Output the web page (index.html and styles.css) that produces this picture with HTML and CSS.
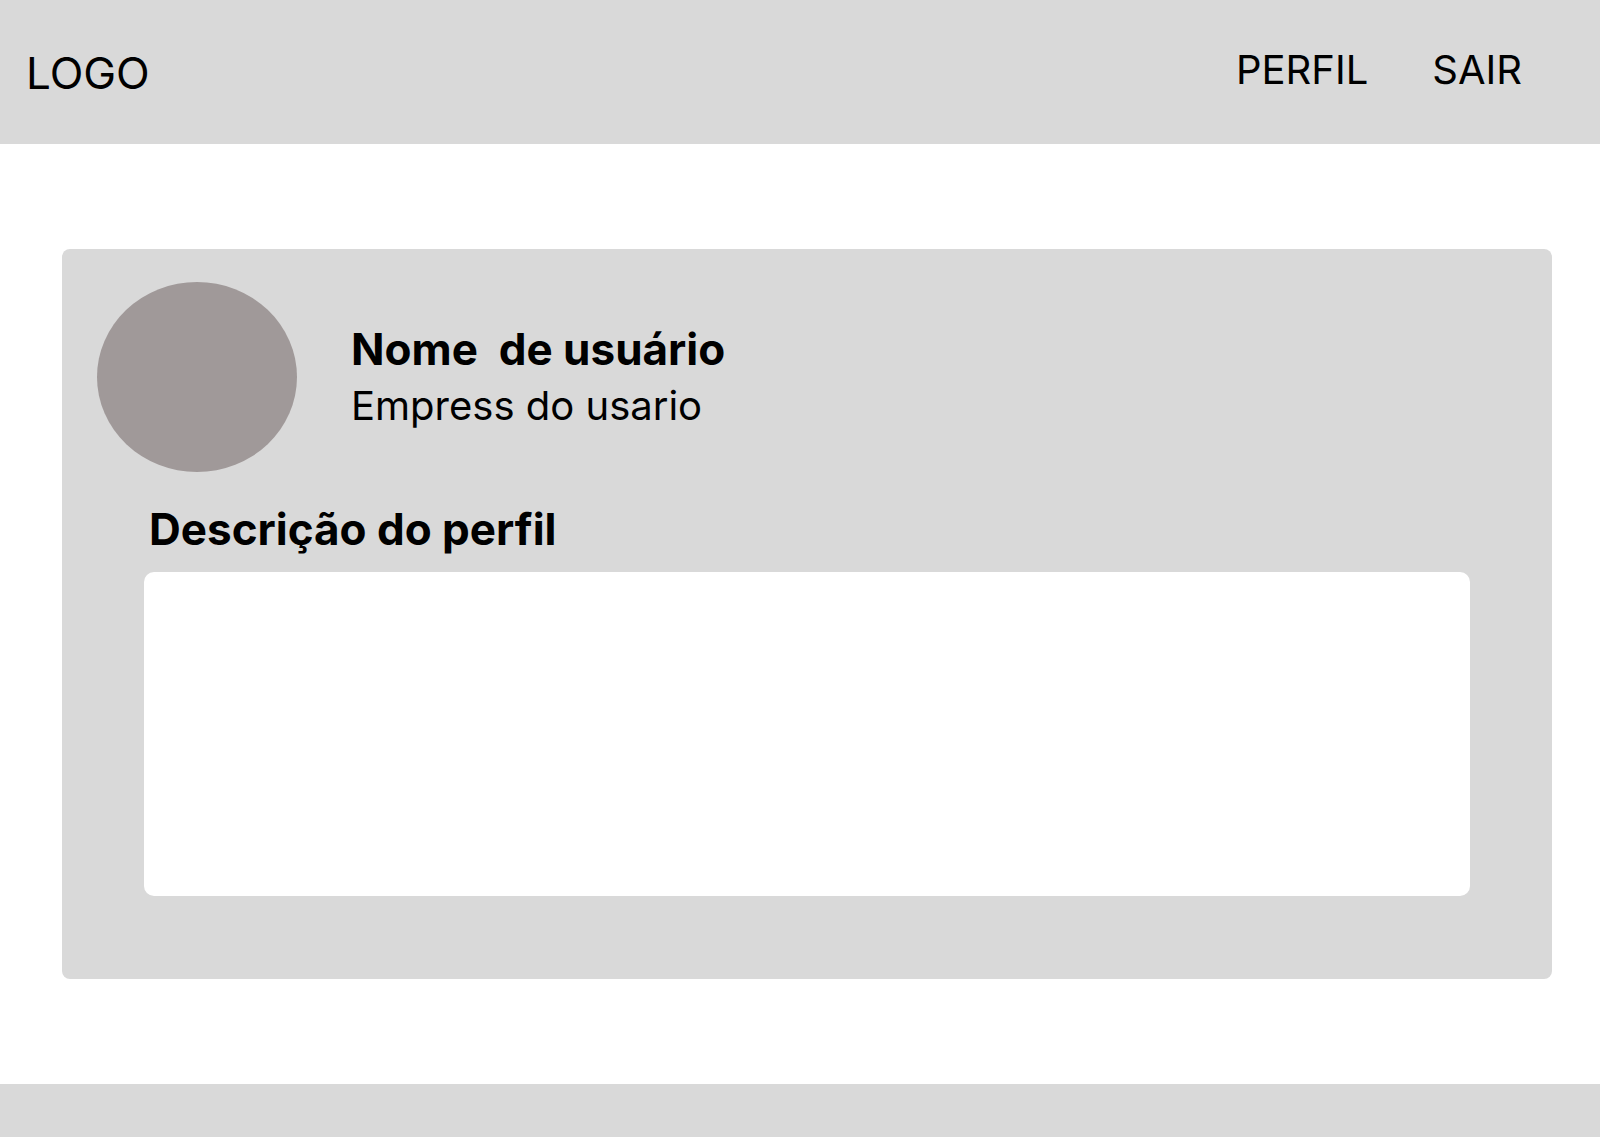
FILE: index.html
```html
<!DOCTYPE html>
<html lang="pt-BR">
<head>
<meta charset="utf-8">
<title>Perfil</title>
<link rel="stylesheet" href="styles.css">
</head>
<body>
<header class="topbar">
  <div class="logo">LOGO</div>
  <nav class="nav">
    <a class="nav-link" href="#">PERFIL</a>
    <a class="nav-link" href="#">SAIR</a>
  </nav>
</header>
<main class="main">
  <section class="card">
    <div class="user">
      <div class="avatar"></div>
      <div class="user-info">
        <div class="user-name">Nome&nbsp; de usuário</div>
        <div class="user-company">Empress do usario</div>
      </div>
    </div>
    <div class="desc">
      <h2 class="desc-title">Descrição do perfil</h2>
      <div class="desc-box"></div>
    </div>
  </section>
</main>
<footer class="footer"></footer>
</body>
</html>
```

FILE: styles.css
```css
* { box-sizing: border-box; }
html, body { margin: 0; padding: 0; }
body {
  font-family: Inter, "Noto Sans", sans-serif;
  color: #000;
  background: #fff;
  width: 1600px;
  height: 1137px;
  display: flex;
  flex-direction: column;
}
.topbar {
  height: 144px;
  background: #d9d9d9;
  display: flex;
  align-items: center;
  justify-content: space-between;
  padding: 0 78px 0 26px;
}
.logo {
  font-size: 44px;
  line-height: 1;
  margin-top: 2px;
}
.nav {
  display: flex;
  gap: 64px;
}
.nav-link {
  font-size: 40px;
  line-height: 1;
  color: #000;
  text-decoration: none;
  margin-bottom: 4px;
}
.main {
  flex: 1;
  padding: 105px 48px 0 62px;
}
.card {
  height: 730px;
  background: #d9d9d9;
  border-radius: 8px;
  padding: 33px 82px 0 35px;
}
.user {
  display: flex;
  align-items: flex-start;
}
.avatar {
  width: 200px;
  height: 190px;
  border-radius: 50%;
  background: #a09999;
  flex: none;
}
.user-info {
  margin-left: 54px;
  margin-top: 40px;
}
.user-name {
  font-size: 44px;
  font-weight: 700;
  line-height: 54px;
}
.user-company {
  font-size: 40px;
  line-height: 48px;
  margin-top: 6px;
}
.desc {
  margin-left: 47px;
}
.desc-title {
  margin: 30px 0 0 5px;
  font-size: 44px;
  font-weight: 700;
  line-height: 54px;
}
.desc-box {
  margin-top: 16px;
  height: 324px;
  background: #fff;
  border-radius: 10px;
}
.footer {
  height: 53px;
  background: #d9d9d9;
}
```
